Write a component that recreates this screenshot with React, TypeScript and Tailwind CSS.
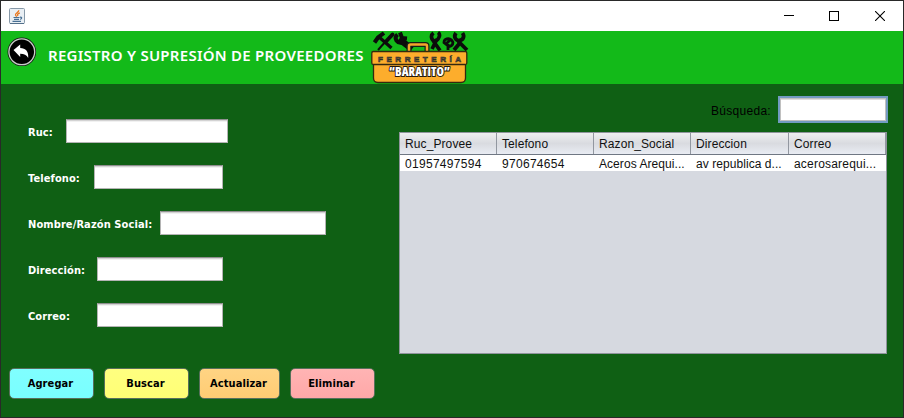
import React from "react";

type FieldProps = { label: string; gap: string; width: string };

const fields: FieldProps[] = [
  { label: "Ruc:", gap: "w-[38px]", width: "w-[162px]" },
  { label: "Telefono:", gap: "w-[66px]", width: "w-[129px]" },
  { label: "Nombre/Razón Social:", gap: "w-[132px]", width: "w-[166px]" },
  { label: "Dirección:", gap: "w-[69px]", width: "w-[126px]" },
  { label: "Correo:", gap: "w-[69px]", width: "w-[126px]" },
];

function Field({ label, gap, width }: FieldProps) {
  return (
    <div className="flex h-6 items-center">
      <label className={`${gap} shrink-0 whitespace-nowrap pt-[2px] text-[11px] font-bold leading-none tracking-[0.1px] text-white`}>
        {label}
      </label>
      <input
        className={`${width} h-6 border border-[#b4b4b4] border-t-[#8f8f8f] bg-white shadow-[inset_0_1px_0_#d3d3d3,inset_0_2px_0_#f1f1f1] outline-none`}
      />
    </div>
  );
}

const buttons = [
  { label: "Agregar", style: "w-[85px] from-[#80ffff] to-[#79ffff]" },
  { label: "Buscar", style: "w-[85px] from-[#ffff80] to-[#ffff75]" },
  { label: "Actualizar", style: "w-[81px] from-[#ffd483] to-[#ffcc74]" },
  { label: "Eliminar", style: "w-[85px] from-[#ffb4b4] to-[#ffa8a8]" },
];

const columns = [
  { title: "Ruc_Provee", value: "01957497594", spacing: "tracking-[0.3px]" },
  { title: "Telefono", value: "970674654", spacing: "tracking-[0.3px]" },
  { title: "Razon_Social", value: "Aceros Arequi...", spacing: "tracking-[0.06px]" },
  { title: "Direccion", value: "av republica d...", spacing: "tracking-[0.06px]" },
  { title: "Correo", value: "acerosarequi...", spacing: "tracking-[0.2px]" },
];

function JavaIcon() {
  return (
    <svg width="16" height="16" viewBox="0 0 16 16" fill="none">
      <rect x=".5" y=".5" width="15" height="15" rx="1" fill="#e9eff4" stroke="#8799a8" />
      <path d="M1 15.5h14" stroke="#53708a" />
      <path d="M9.8 2.3C10 4.5 6 5 6.5 7c.1.6.8 1 1.2 1.8M10.8 4.8C8.5 5.8 8 6.5 9 8" stroke="#e8761c" strokeWidth="1.3" />
      <path d="M4.5 9.5h6M5 11.4h5M3.5 13.4h8.5M11 9.3c2.2-.5 2.2 1.3.2 2.1" stroke="#476f93" strokeWidth="1.2" />
    </svg>
  );
}

function BackIcon() {
  return (
    <svg width="30" height="30" viewBox="0 0 30 30">
      <circle cx="14.8" cy="14.8" r="14.3" fill="#151515" />
      <circle cx="14.8" cy="14.8" r="12.9" fill="#000" stroke="#c9cfc9" strokeWidth="1.3" />
      <path d="M6.5 13 13.2 7.5v3.4c5.5.1 8.6 3.4 8 10.1-1.6-3.2-4-4.3-8-4.3v3.2z" fill="#fff" />
    </svg>
  );
}

function Logo() {
  return (
    <svg width="98" height="53" viewBox="0 0 98 53">
      <g fill="none" stroke="#0b0b0b">
        <path d="m3.5 11.5 3.5-5 6-4.5" strokeWidth="4" />
        <path d="M8 6 20.5 17" strokeWidth="3.2" />
        <path d="m21.5 3.5-7 7.5" strokeWidth="4" strokeLinecap="round" />
        <path d="m15 10-8 9" strokeWidth="2" />
        <path d="M26.5 3.5c-4.5 4 0 9.5 5 8M29 1.5l2 5.5 5 .5" strokeWidth="4" />
        <path d="m28 8 13 10" strokeWidth="6.5" />
        <path d="M62.5 2c-3.5 2.5-2 7 1 8M67 1.5c3 2 1 6-1.5 8M62 9.5l7 10M66 8l-5 10" strokeWidth="3.7" />
        <path d="m75 13 4-4M73 11.5c0-4 5-5 7.5-2.5s1.5 6-2.5 6.5zM77 13v6" strokeWidth="2.8" />
        <path d="M85 2c-3 4 0 8 3.5 7.5s5.5-4 3-7.5M88 8v5l-5 6M89 12l7 7" strokeWidth="3.8" />
      </g>
      <path d="M38 21v-6q0-1.5 1.5-1.5h15q1.5 0 1.5 1.5v6" fill="none" stroke="#172017" strokeWidth="5" />
      <path d="M38 21v-6q0-1.5 1.5-1.5h15q1.5 0 1.5 1.5v6" fill="none" stroke="#f6a52b" strokeWidth="2.5" />
      <path d="M2.5 31h92v16q0 4.5-4.5 4.5H7q-4.5 0-4.5-4.5z" fill="#fdad2c" stroke="#34290f" strokeWidth="1.3" />
      <rect x=".8" y="20.5" width="95" height="13" rx="1.5" fill="#fdad2c" stroke="#34290f" strokeWidth="1.3" />
      <text x="7" y="31" textLength="83" fontFamily="Liberation Sans" fontSize="8" fontWeight="700" fill="#6e685c" stroke="#302e29" strokeWidth=".6">FERRETERÍA</text>
      <text x="18" y="45.3" textLength="61" lengthAdjust="spacingAndGlyphs" fontFamily="Open Sans" fontSize="12.5" fontWeight="800" fill="#fff" stroke="#26190a" strokeWidth="1.8" paintOrder="stroke">“BARATITO”</text>
    </svg>
  );
}

export default function App() {
  return (
    <div className="flex h-[418px] w-[904px] flex-col overflow-hidden border border-[#292929] bg-[#0f6014] font-['DejaVu_Sans_Condensed','DejaVu_Sans',sans-serif] [font-stretch:condensed]">
      <header className="flex h-[30px] shrink-0 items-center justify-between bg-white pl-2">
        <JavaIcon />
        <div className="flex h-full text-black">
          <div className="flex w-[45px] items-center justify-center">
            <svg width="10" height="10"><path d="M0 4.5h10" stroke="#000" /></svg>
          </div>
          <div className="flex w-[46px] items-center justify-center">
            <svg width="10" height="10"><rect x=".5" y=".5" width="9" height="9" fill="none" stroke="#000" /></svg>
          </div>
          <div className="flex w-[46px] items-center justify-center">
            <svg width="10" height="10"><path d="m0 0 10 10M10 0 0 10" stroke="#000" strokeWidth="1.1" /></svg>
          </div>
        </div>
      </header>
      <div className="flex h-[53px] shrink-0 bg-[#13ba19]">
        <div className="w-[47px] pl-1.5 pt-1.5"><BackIcon /></div>
        <h1 className="w-[323px] whitespace-nowrap pt-[14px] font-['Noto_Sans',sans-serif] text-[15px] font-semibold leading-5 tracking-[0.26px] text-white [font-stretch:normal]">
          REGISTRO Y SUPRESIÓN DE PROVEEDORES
        </h1>
        <Logo />
      </div>
      <main className="flex min-h-0 flex-1">
        <section className="w-[398px] shrink-0 pt-[35px]">
          <div className="flex flex-col gap-[22px] pl-[27px]">
            {fields.map((f) => <Field key={f.label} {...f} />)}
          </div>
          <div className="mt-[41px] flex gap-2.5 pl-2">
            {buttons.map((b) => (
              <button key={b.label} className={`${b.style} h-[31px] rounded-[5px] border border-[#58705c] bg-linear-to-b pr-0.5 text-[11px] font-bold leading-none tracking-[0.1px] text-black`}>
                {b.label}
              </button>
            ))}
          </div>
        </section>
        <section className="w-[489px] font-['Liberation_Sans',Arial,sans-serif] text-[12px] text-[#111]">
          <div className="flex h-12 items-start justify-end pt-3">
            <label className="pr-[7px] pt-[7px] leading-4 tracking-[0.3px] text-black">Búsqueda:</label>
            <input className="h-[27px] w-[110px] border-2 border-[#739bc1] bg-white shadow-[inset_0_0_0_1px_#c0c0c0,inset_0_2px_0_#dedede] outline-none" />
          </div>
          <div className="h-[222px] w-[488px] border border-[#8f949c] bg-[#d6d9e0]">
            <div className="flex h-[22px] border-b border-[#6f7783] bg-linear-to-b from-[#eeeef0] via-[#d9dbe0] to-[#e9ecf3] tracking-[0.1px]">
              {columns.map((c, i) => (
                <div key={c.title} className={`${i === 3 ? "w-[98px]" : "w-[97px]"} border-r border-[#9297a0] pl-[5px] pt-[2px] leading-[18px]`}>{c.title}</div>
              ))}
            </div>
            <div className="flex h-4 bg-white">
              {columns.map((c, i) => (
                <div key={c.title} className={`${i === 3 ? "w-[98px]" : "w-[97px]"} ${c.spacing} whitespace-nowrap pl-[5px] leading-[18px]`}>{c.value}</div>
              ))}
            </div>
          </div>
        </section>
      </main>
    </div>
  );
}
